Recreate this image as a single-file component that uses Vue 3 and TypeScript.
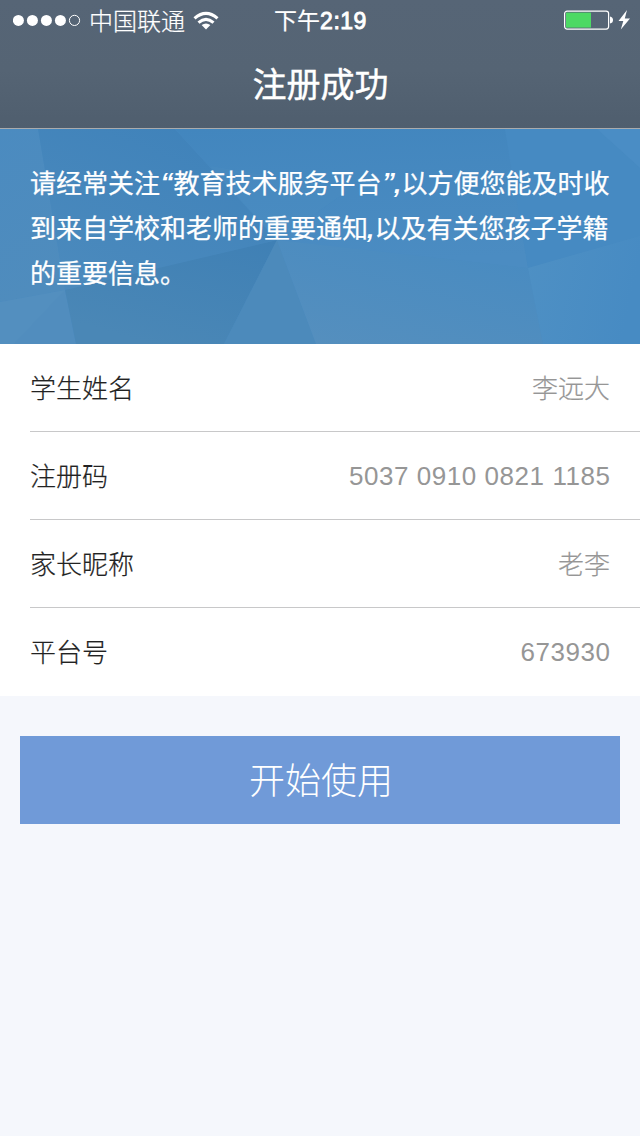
<script setup lang="ts">
interface Field {
  label: string
  value: string
  numeric: boolean
}

const carrier = '中国联通'
const fields: Field[] = [
  { label: '学生姓名', value: '李远大', numeric: false },
  { label: '注册码', value: '5037 0910 0821 1185', numeric: true },
  { label: '家长昵称', value: '老李', numeric: false },
  { label: '平台号', value: '673930', numeric: true },
]
</script>

<template>
  <div class="screen">
    <header class="top">
      <div class="status">
        <div class="status-left">
          <svg class="signal" width="68" height="12" viewBox="0 0 68 12">
            <circle v-for="n in 4" :key="n" :cx="14 * n - 8.6" cy="6.4" r="5.5" fill="#fff" />
            <circle cx="61.5" cy="6.4" r="5.1" fill="none" stroke="#fff" stroke-width="1" />
          </svg>
          <span class="carrier">{{ carrier }}</span>
          <svg class="wifi" width="26" height="19" viewBox="0 0 26 19">
            <g fill="none" stroke="#fff" stroke-width="3.1">
              <path d="M1.5 7.3 Q13 -2.7 24.5 7.3" />
              <path d="M5.5 11.6 Q13 5.2 20.5 11.6" />
            </g>
            <path d="M8.6 14.1 Q13 10.9 17.4 14.1 L13 18.4 Z" fill="#fff" />
          </svg>
        </div>
        <div class="time"><span class="period">下午</span><span class="clock">2:19</span></div>
        <div class="status-right">
          <svg width="68" height="22" viewBox="0 0 68 22">
            <rect x="0.6" y="2.1" width="44" height="18" rx="2.5" fill="none" stroke="#fff" stroke-width="1.2" />
            <rect x="2" y="3.6" width="25" height="15" fill="#4cd964" />
            <path d="M46 7.6 Q49 8.1 49 11.1 Q49 14.1 46 14.6 Z" fill="#fff" />
            <path d="M63 1 L54.5 12.1 H59.3 L56.8 20.4 L66 9.4 H60.8 Z" fill="#fff" />
          </svg>
        </div>
      </div>
      <h1 class="title">注册成功</h1>
    </header>

    <section class="banner">
      <svg class="facets" width="640" height="215" viewBox="0 0 640 215">
        <defs>
          <linearGradient id="left" x1="0" y1="0" x2="0.2" y2="1">
            <stop offset="0" stop-color="#4b8bc0" />
            <stop offset="1" stop-color="#4f8cbd" />
          </linearGradient>
          <linearGradient id="mid" x1="0.8" y1="0" x2="0.2" y2="1">
            <stop offset="0" stop-color="#3f82ba" />
            <stop offset="1" stop-color="#4b8abd" />
          </linearGradient>
          <linearGradient id="low" x1="1" y1="0" x2="0.4" y2="1">
            <stop offset="0" stop-color="#3f80b5" />
            <stop offset="1" stop-color="#4a87b6" />
          </linearGradient>
          <linearGradient id="upper" x1="0" y1="0" x2="0.1" y2="1">
            <stop offset="0" stop-color="#4286be" />
            <stop offset="1" stop-color="#4b8cc2" />
          </linearGradient>
          <linearGradient id="lower" x1="0.8" y1="0" x2="0.1" y2="1">
            <stop offset="0" stop-color="#488bc1" />
            <stop offset="1" stop-color="#558fbe" />
          </linearGradient>
          <linearGradient id="right" x1="0" y1="0" x2="1" y2="0.2">
            <stop offset="0" stop-color="#4e90c4" />
            <stop offset="1" stop-color="#478bc3" />
          </linearGradient>
        </defs>
        <rect width="640" height="215" fill="#488ac0" />
        <path d="M0 0H38L65 161L0 173Z" fill="url(#left)" />
        <path d="M0 173L65 161L76 215H0Z" fill="#518dbe" />
        <path d="M0 173L65 161L14 215H0Z" fill="#538fbf" />
        <path d="M38 0H175L277 111L65 161Z" fill="url(#mid)" />
        <path d="M65 161L277 111L224 215H76Z" fill="url(#low)" />
        <path d="M175 0H505L528 139L277 111Z" fill="url(#upper)" />
        <path d="M210 37L277 111L350 60Z" fill="#4f8fc4" opacity="0.2" />
        <path d="M277 111L316 215H224Z" fill="#4c8abb" />
        <path d="M277 111L528 139L543 215H316Z" fill="url(#lower)" />
        <path d="M505 0H597L640 39V107L528 139Z" fill="#468ac2" />
        <path d="M597 0H640V39Z" fill="#4a8dc5" />
        <path d="M528 139L640 107V215H543Z" fill="url(#right)" />
      </svg>
      <p class="message">
        <span class="line">请经常关注<i class="quote">“</i>教育技术服务平台<i class="quote">”</i><i class="comma">,</i>以方便您能及时收</span>
        <span class="line">到来自学校和老师的重要通知<i class="comma">,</i>以及有关您孩子学籍</span>
        <span class="line">的重要信息。</span>
      </p>
    </section>

    <dl class="fields">
      <div v-for="field in fields" :key="field.label" class="row">
        <dt>{{ field.label }}</dt>
        <dd :class="{ numeric: field.numeric }">{{ field.value }}</dd>
      </div>
    </dl>

    <button class="start" type="button">开始使用</button>
  </div>
</template>

<style>
body {
  margin: 0;
  background: #f5f7fc;
}
</style>

<style scoped>
.screen {
  width: 640px;
  height: 1136px;
  overflow: hidden;
  background: #f5f7fc;
  font-family: "Liberation Sans", "Noto Sans CJK SC", sans-serif;
}
.top {
  box-sizing: border-box;
  height: 129px;
  border-bottom: 1px solid #a9abad;
  background: linear-gradient(#566576 0%, #556474 55%, #4f5e6e 100%);
  color: #fff;
}
.status {
  display: grid;
  grid-template-columns: 240px 160px 240px;
  align-items: center;
  height: 40px;
}
.status-left {
  display: flex;
  align-items: center;
  padding-left: 13px;
}
.carrier {
  margin-left: 8px;
  font: 300 24px/38px "Noto Sans CJK SC", sans-serif;
  -webkit-text-stroke: 0.2px #fff;
}
.wifi {
  margin-left: 8px;
}
.time {
  display: flex;
  align-items: center;
  justify-content: center;
  padding-left: 1px;
}
.period {
  padding-bottom: 2px;
  font: 400 23px/38px "Noto Sans CJK SC", sans-serif;
  -webkit-text-stroke: 0.2px #fff;
}
.clock {
  padding-top: 2px;
  font: 400 23px/38px "Liberation Sans", sans-serif;
  letter-spacing: 0.5px;
  -webkit-text-stroke: 0.9px #fff;
}
.status-right {
  display: flex;
  justify-content: flex-end;
  padding-right: 8px;
}
.title {
  margin: 0;
  font: 400 34px/85px "Noto Sans CJK SC", sans-serif;
  text-align: center;
  text-indent: 1px;
  -webkit-text-stroke: 0.4px #fff;
}
.banner {
  display: grid;
  height: 215px;
}
.facets,
.message {
  grid-area: 1 / 1;
}
.message {
  z-index: 1;
  margin: 0;
  padding: 30px 30px 0;
  color: #fff;
  font: 400 26px/45px "Noto Sans CJK SC", sans-serif;
  -webkit-text-stroke: 0.25px #fff;
}
.line {
  display: block;
  height: 45px;
  white-space: nowrap;
}
.quote,
.comma {
  display: inline-block;
  height: 45px;
  font: italic 700 26px/45px "Liberation Sans", sans-serif;
  -webkit-text-stroke: 0;
}
.quote {
  width: 13.5px;
  line-height: 40px;
  vertical-align: 2px;
  height: 40px;
  text-indent: 0.5px;
}
.comma {
  width: 6.5px;
  text-indent: -1px;
}
.fields {
  margin: 0;
  padding-left: 30px;
  background: #fff;
}
.row {
  box-sizing: border-box;
  display: flex;
  justify-content: space-between;
  height: 88px;
  padding-right: 30px;
  border-bottom: 1px solid #c8c8c9;
  font-size: 26px;
  font-weight: 300;
  line-height: 90px;
}
.row:last-child {
  border-bottom: 0;
}
dt {
  color: #222;
  -webkit-text-stroke: 0.2px #222;
}
dd {
  margin: 0;
  color: #969696;
  -webkit-text-stroke: 0.2px #969696;
}
dd.numeric {
  margin-right: -0.5px;
  line-height: 88px;
  letter-spacing: 0.55px;
  -webkit-text-stroke: 0;
}
.start {
  display: block;
  width: 600px;
  height: 88px;
  margin: 40px 20px 0;
  padding: 0 0 4px 2px;
  border: 0;
  background: #709ad8;
  color: #fff;
  font: 300 36px/84px "Noto Sans CJK SC", sans-serif;
}
</style>
